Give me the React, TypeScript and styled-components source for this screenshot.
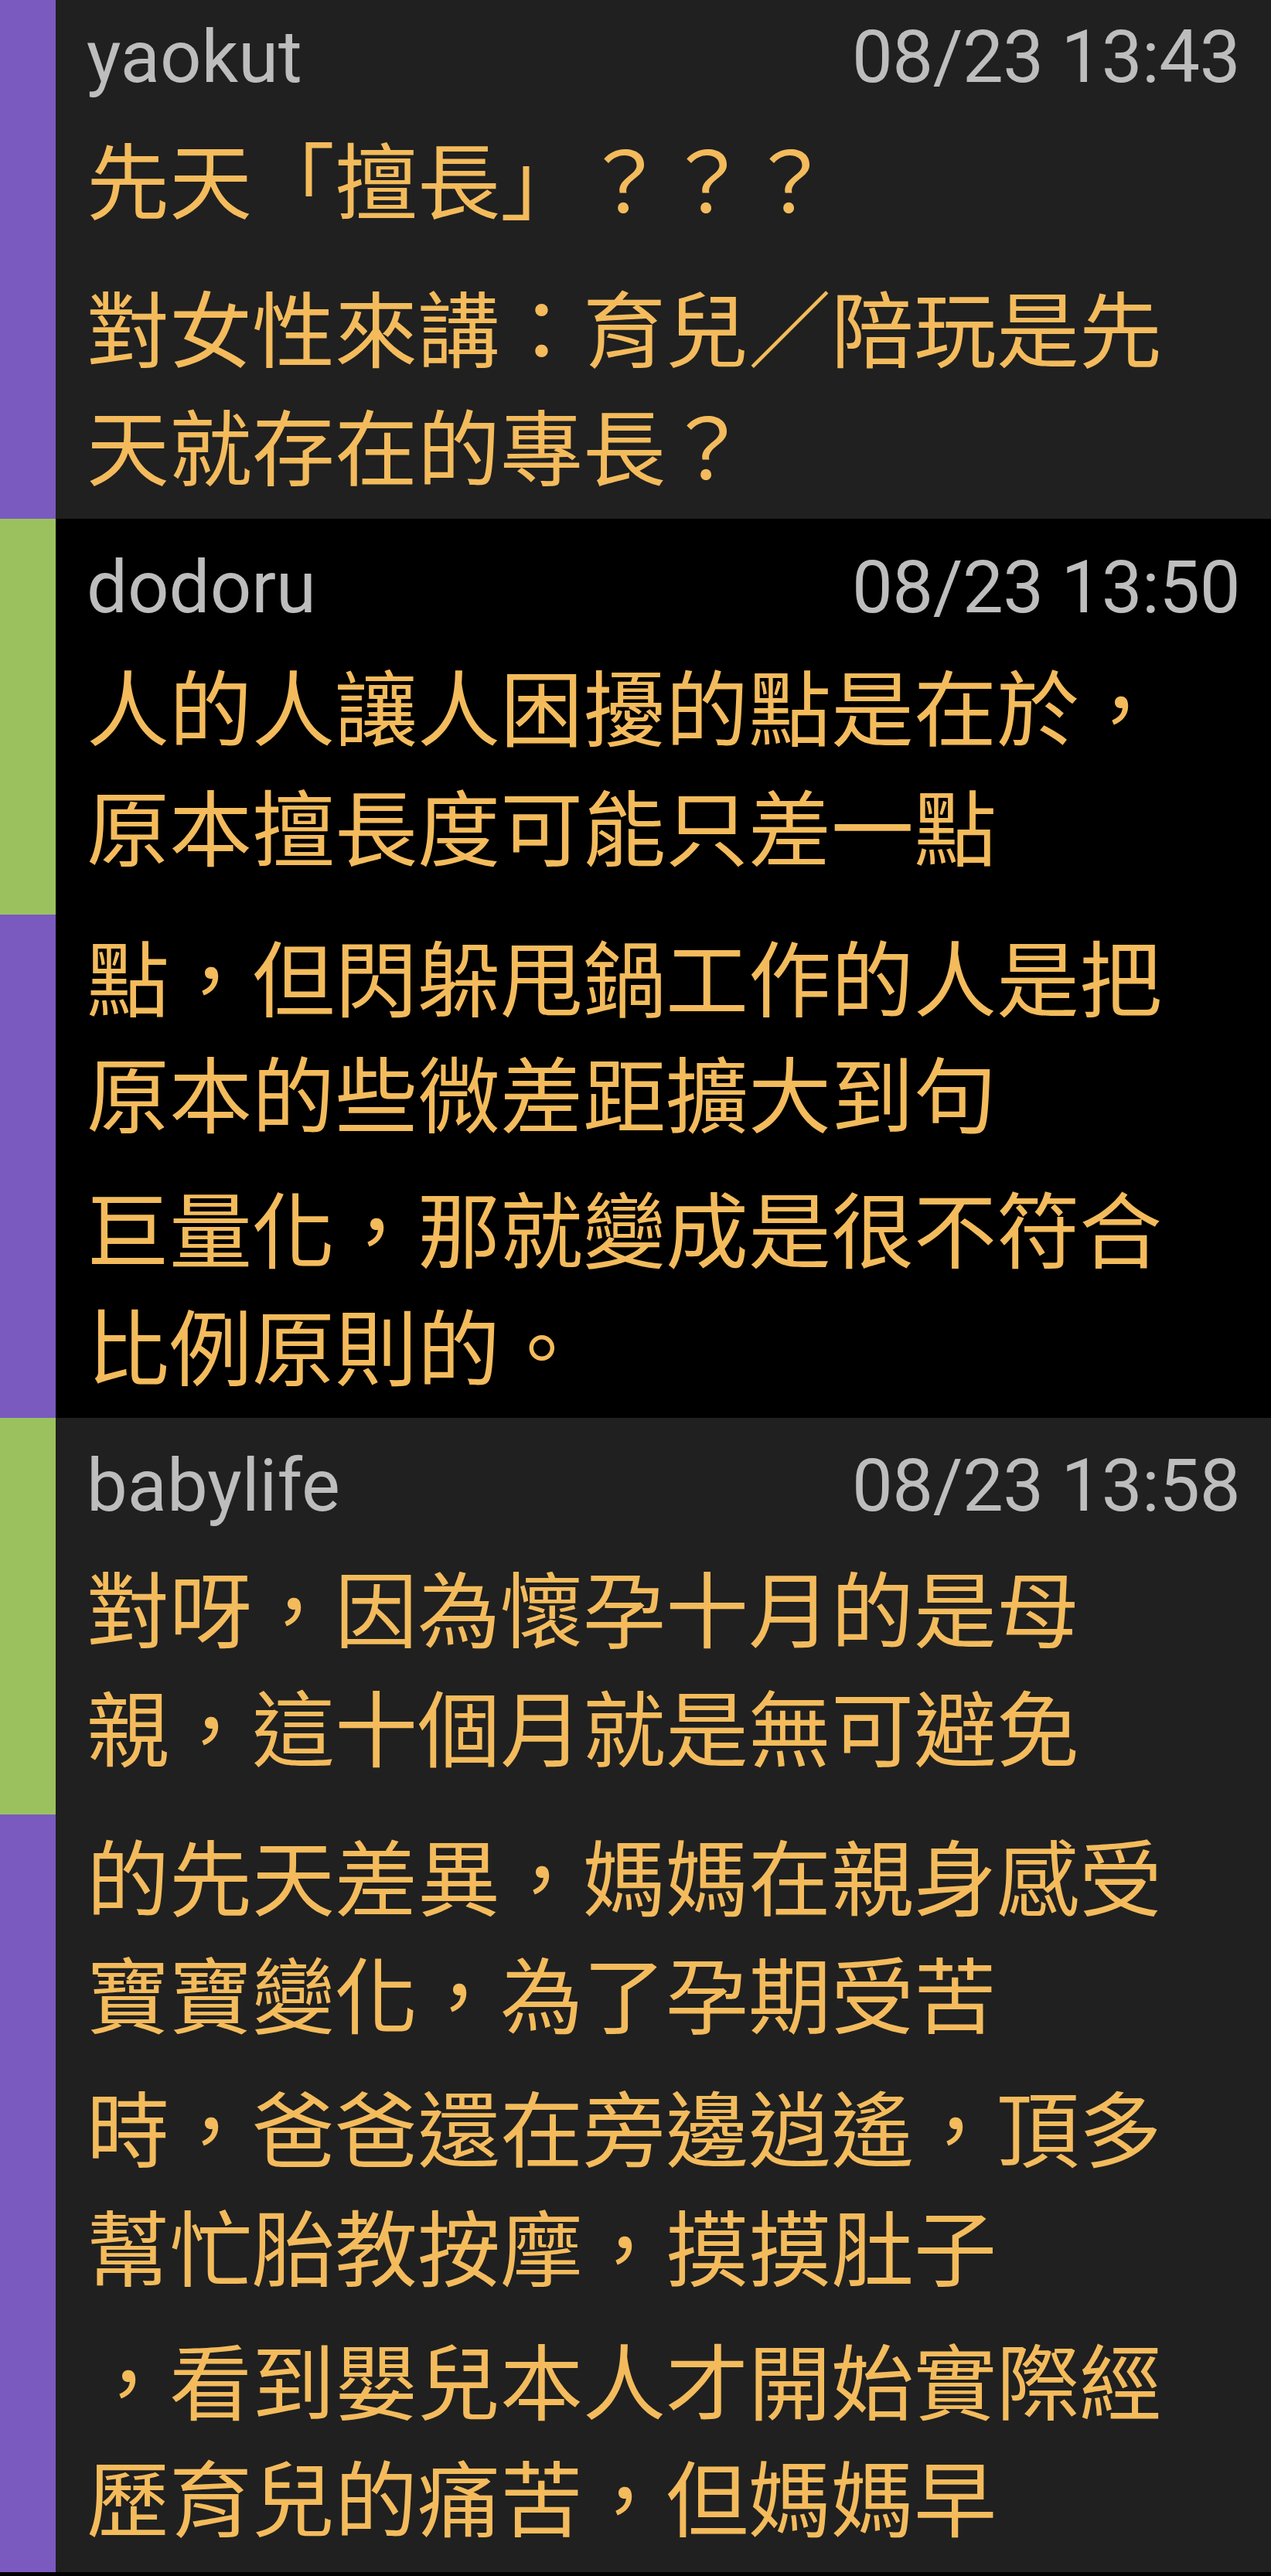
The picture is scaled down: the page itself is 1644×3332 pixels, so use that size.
import React from "react";
import styled, { createGlobalStyle } from "styled-components";

const Global = createGlobalStyle`
  html, body {
    margin: 0;
    padding: 0;
    background: #000;
  }
  * { box-sizing: border-box; }
`;

const Page = styled.main`
  display: flex;
  flex-direction: column;
  width: 1644px;
  padding-bottom: 5px;
  background: #000;
`;

const Card = styled.article<{ $tone: "dark" | "black" }>`
  display: flex;
  align-items: stretch;
  background: ${(p) => (p.$tone === "dark" ? "#202020" : "#000000")};
`;

const Rail = styled.div`
  flex: none;
  width: 72px;
  display: flex;
  flex-direction: column;
  background: #7a5abf;
`;

const RailLead = styled.div<{ $h: number }>`
  flex: none;
  height: ${(p) => p.$h}px;
  background: #9bc15f;
`;

const Body = styled.div<{ $top: number; $bottom: number }>`
  flex: 1;
  min-width: 0;
  display: flex;
  flex-direction: column;
  padding: ${(p) => p.$top}px 40px ${(p) => p.$bottom}px 40px;
`;

const Header = styled.header`
  display: flex;
  justify-content: space-between;
  align-items: baseline;
  height: 110px;
  font-family: Roboto, "Liberation Sans", sans-serif;
  font-size: 94px;
  line-height: 110px;
  color: #bdbdbd;
`;

const Name = styled.span``;
const Stamp = styled.time`
  letter-spacing: -0.5px;
`;

const Line = styled.p<{ $gap: number }>`
  margin: ${(p) => p.$gap}px 0 0;
  height: 150px;
  font-family: "Noto Sans CJK TC", "Noto Sans CJK SC", sans-serif;
  font-size: 107px;
  line-height: 150px;
  color: #f3bb5c;
  white-space: nowrap;
`;

type Row = {
  name: string;
  time: string;
  tone: "dark" | "black";
  lead: number;
  top: number;
  bottom: number;
  lines: [string, number][];
};

const rows: Row[] = [
  {
    name: "yaokut",
    time: "08/23 13:43",
    tone: "dark",
    lead: 0,
    top: 19,
    bottom: 22,
    lines: [
      ["先天「擅長」？？？", 25],
      ["對女性來講：育兒／陪玩是先", 42],
      ["天就存在的專長？", 3],
    ],
  },
  {
    name: "dodoru",
    time: "08/23 13:50",
    tone: "black",
    lead: 512,
    top: 34,
    bottom: 21,
    lines: [
      ["人的人讓人困擾的點是在於，", 21],
      ["原本擅長度可能只差一點", 5],
      ["點，但閃躲甩鍋工作的人是把", 45],
      ["原本的些微差距擴大到句", 0],
      ["巨量化，那就變成是很不符合", 25],
      ["比例原則的。", 2],
    ],
  },
  {
    name: "babylife",
    time: "08/23 13:58",
    tone: "dark",
    lead: 513,
    top: 33,
    bottom: 25,
    lines: [
      ["對呀，因為懷孕十月的是母", 25],
      ["親，這十個月就是無可避免", 4],
      ["的先天差異，媽媽在親身感受", 43],
      ["寶寶變化，為了孕期受苦", 2],
      ["時，爸爸還在旁邊逍遙，頂多", 23],
      ["幫忙胎教按摩，摸摸肚子", 4],
      ["，看到嬰兒本人才開始實際經", 23],
      ["歷育兒的痛苦，但媽媽早", 1],
    ],
  },
];

export default function App() {
  return (
    <>
      <Global />
      <Page>
        {rows.map((r) => (
          <Card key={r.name} $tone={r.tone}>
            <Rail>
              <RailLead $h={r.lead} />
            </Rail>
            <Body $top={r.top} $bottom={r.bottom}>
              <Header>
                <Name>{r.name}</Name>
                <Stamp>{r.time}</Stamp>
              </Header>
              {r.lines.map(([t, g], i) => (
                <Line key={i} $gap={g}>
                  {t}
                </Line>
              ))}
            </Body>
          </Card>
        ))}
      </Page>
    </>
  );
}
